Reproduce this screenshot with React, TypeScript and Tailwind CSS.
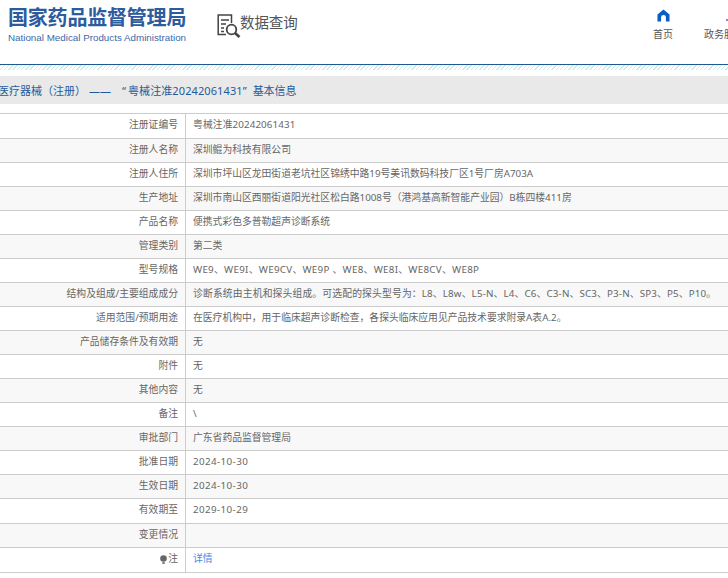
const cjk = '[font-family:"Noto_Sans","Noto_Sans_CJK_SC",sans-serif]';

interface Row {
  label: string;
  value: string;
  tall?: boolean;
  tracking?: string;
}

const rows: Row[] = [
  { label: '注册证编号', value: '粤械注准20242061431', tall: true, tracking: 'tracking-[0.1px]' },
  { label: '注册人名称', value: '深圳鲲为科技有限公司' },
  { label: '注册人住所', value: '深圳市坪山区龙田街道老坑社区锦绣中路19号美讯数码科技厂区1号厂房A703A' },
  { label: '生产地址', value: '深圳市南山区西丽街道阳光社区松白路1008号（港鸿基高新智能产业园）B栋四楼411房' },
  { label: '产品名称', value: '便携式彩色多普勒超声诊断系统' },
  { label: '管理类别', value: '第二类' },
  { label: '型号规格', value: 'WE9、WE9I、WE9CV、WE9P 、WE8、WE8I、WE8CV、WE8P', tracking: 'tracking-[0.28px]' },
  { label: '结构及组成/主要组成成分', value: '诊断系统由主机和探头组成。可选配的探头型号为：L8、L8w、L5-N、L4、C6、C3-N、SC3、P3-N、SP3、P5、P10。', tracking: 'tracking-[0.15px]' },
  { label: '适用范围/预期用途', value: '在医疗机构中，用于临床超声诊断检查，各探头临床应用见产品技术要求附录A表A.2。' },
  { label: '产品储存条件及有效期', value: '无' },
  { label: '附件', value: '无' },
  { label: '其他内容', value: '无' },
  { label: '备注', value: '\\' },
  { label: '审批部门', value: '广东省药品监督管理局' },
  { label: '批准日期', value: '2024-10-30', tracking: 'tracking-[0.4px]' },
  { label: '生效日期', value: '2024-10-30', tracking: 'tracking-[0.4px]' },
  { label: '有效期至', value: '2029-10-29', tall: true, tracking: 'tracking-[0.4px]' },
  { label: '变更情况', value: '' },
];

function HomeIcon() {
  return (
    <svg width="13" height="13" viewBox="0 0 14 14" aria-hidden="true">
      <path d="M7 0.5 L13.5 6 V13.5 H9.6 V9 A2.6 2.6 0 0 0 4.4 9 V13.5 H0.5 V6 Z" fill="#0c5fc0" />
    </svg>
  );
}

function DocSearchIcon() {
  return (
    <svg width="24" height="24" viewBox="0 0 24 24" fill="none" stroke="#444" aria-hidden="true">
      <path d="M9 20.5 H1.2 V1 H14.5 V9" strokeWidth="1.5" />
      <path d="M4 6 H12 M4 10 H9 M4 14 H7 M4 17.5 H7" strokeWidth="1.4" />
      <circle cx="14.5" cy="15.5" r="4.8" strokeWidth="1.8" />
      <path d="M18 19 L22.5 23" strokeWidth="2.6" />
    </svg>
  );
}

function BulbIcon() {
  return (
    <svg width="7" height="10" viewBox="0 0 7 10" className="mr-px" aria-hidden="true">
      <circle cx="3.5" cy="3.5" r="3.3" fill="#666" />
      <rect x="2.2" y="7" width="2.6" height="2" fill="#888" />
    </svg>
  );
}

function Cell({ label, value, tall, tracking, striped }: Row & { striped: boolean }) {
  return (
    <div className={`flex border-t border-[#ccc] ${tall ? 'h-[25px]' : 'h-6'} ${striped ? 'bg-[#f8f8f8]' : 'bg-white'}`}>
      <div className="w-[186px] shrink-0 border-r border-[#ccc] pr-[7px] pb-px flex items-center justify-end">{label}</div>
      <div className={`pl-[7px] pb-px flex items-center whitespace-nowrap ${tracking ?? ''}`}>{value}</div>
    </div>
  );
}

export default function App() {
  return (
    <div className={`w-[728px] h-[578px] overflow-hidden bg-white ${cjk}`}>
      <header className="h-[64px] flex items-start overflow-hidden">
        <div className="ml-2 mt-[5px] w-[178px] shrink-0">
          <div className="text-[20px] leading-[26px] font-bold tracking-[-0.2px] text-[#2c5b9e] whitespace-nowrap">国家药品监督管理局</div>
          <div className="mt-[1px] text-[9.8px] leading-[12px] text-[#3a6aa8] whitespace-nowrap [font-family:'Liberation_Sans',sans-serif]">National Medical Products Administration</div>
        </div>
        <div className="ml-[31px] mt-[14px] flex items-start shrink-0">
          <DocSearchIcon />
          <span className="-ml-px text-[14.5px] leading-4 text-[#555] whitespace-nowrap tracking-[-0.1px]">数据查询</span>
        </div>
        <nav className="ml-[355.4px] mt-[9px] flex shrink-0 text-[10px] leading-[14px] text-[#555]">
          <div className="w-5 flex flex-col items-center gap-[5px]">
            <HomeIcon />
            <span className="whitespace-nowrap">首页</span>
          </div>
          <div className="ml-[31px] flex flex-col items-center gap-[4px]">
            <svg width="14" height="14" viewBox="0 0 14 14" aria-hidden="true">
              <circle cx="10" cy="11" r="1" fill="#7a5aa0" />
            </svg>
            <span className="whitespace-nowrap">政务服务</span>
          </div>
        </nav>
      </header>
      <div className="border-t border-[#1f5a8c] h-[6px] bg-[repeating-linear-gradient(135deg,#cfe9f2_0,#cfe9f2_1px,#ffffff_1px,#ffffff_3px)]" />
      <div className="mt-[6px] h-[28px] pt-[3px] bg-[#e9e9e9] flex items-center -ml-[2px] text-[11px] text-[#1f5a9c] whitespace-nowrap">
        <span>医疗器械（注册）</span>
        <span className="ml-[3px]">——</span>
        <span className="ml-[11px]">“</span>
        <span className="ml-[2px] tracking-[0.1px]">粤械注准20242061431</span>
        <span>”</span>
        <span className="ml-[6px]">基本信息</span>
      </div>
      <div className="mt-[9px] text-[9.8px] text-[#666] border-b border-[#ccc]">
        {rows.map((row, i) => (
          <Cell key={row.label} {...row} striped={i % 2 === 1} />
        ))}
        <div className="flex border-t border-[#ccc] h-[25px] bg-white">
          <div className="w-[186px] shrink-0 border-r border-[#ccc] pr-[7px] pb-px flex items-center justify-end">
            <BulbIcon />注
          </div>
          <div className="pl-[7px] pb-px flex items-center text-[#3d8ee8]">详情</div>
        </div>
      </div>
    </div>
  );
}
